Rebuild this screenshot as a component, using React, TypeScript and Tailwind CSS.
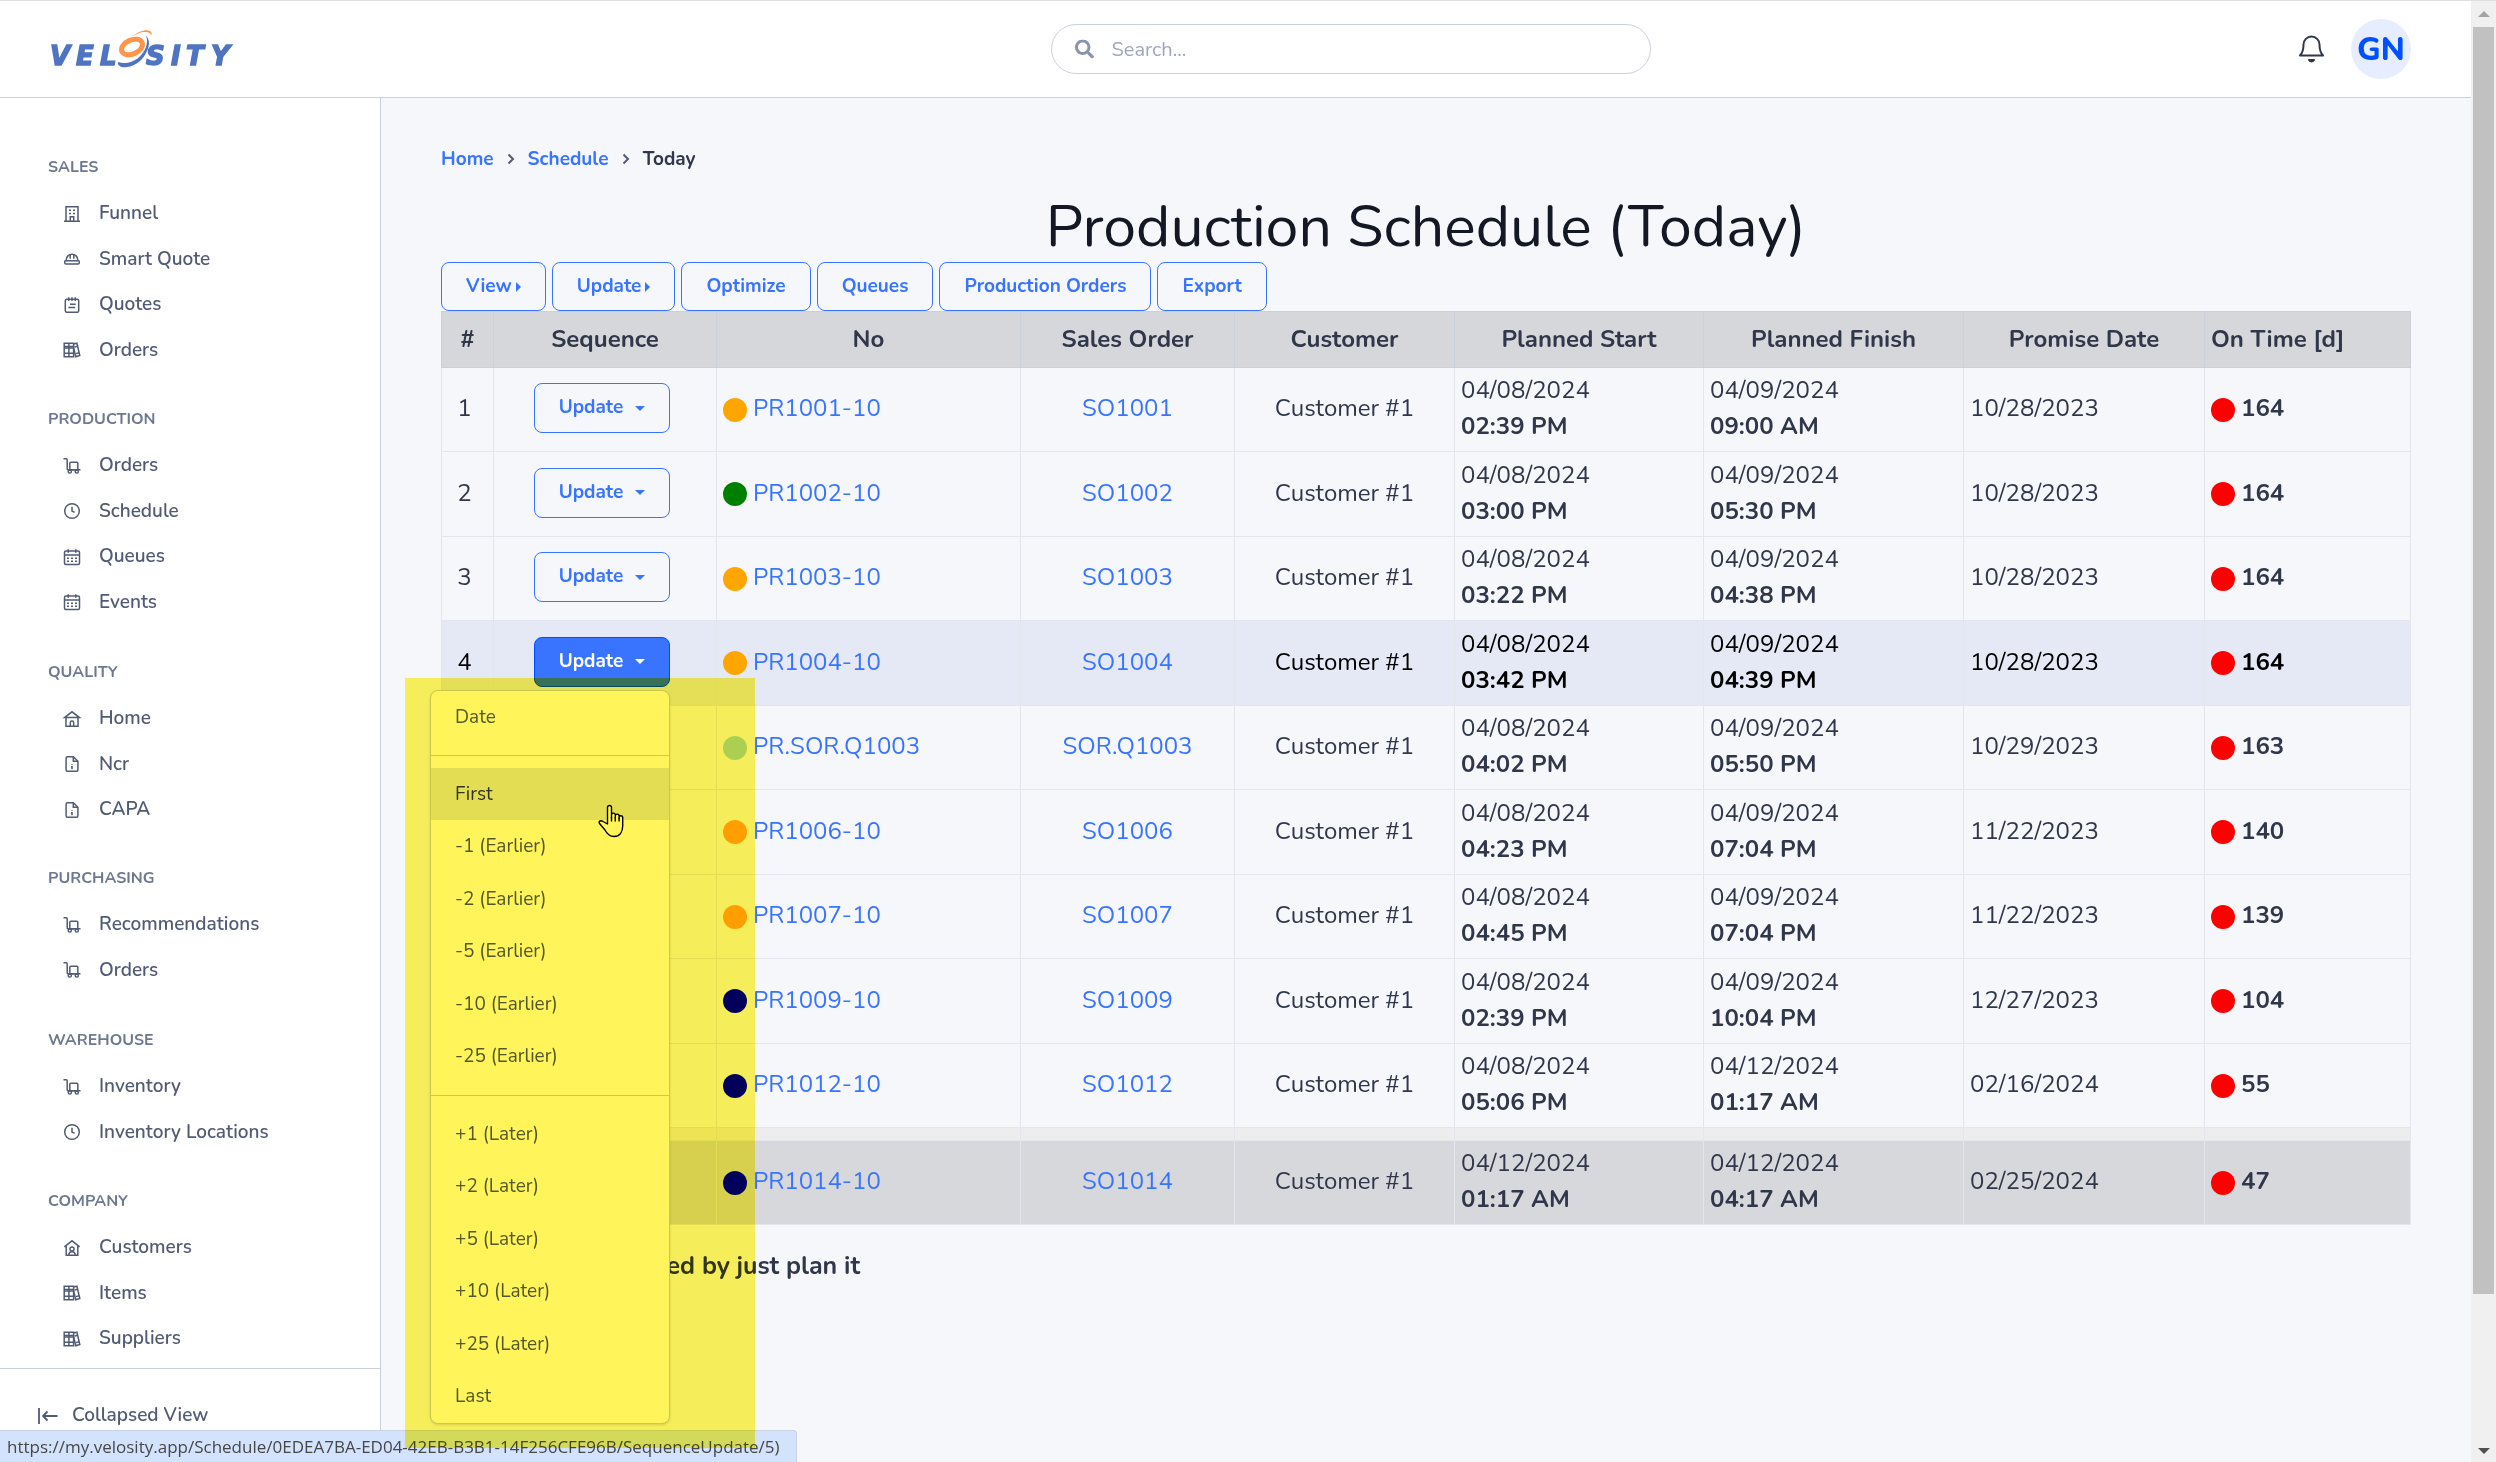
import type { ReactNode } from "react";
import { clsx } from "clsx";
import { FaSearch } from "react-icons/fa";

type IconName = "building" | "hat" | "notes" | "books" | "dolly" | "clock" | "calendar" | "home" | "file" | "houseUser";

const nav: { title: string; items: [IconName, string][] }[] = [
  { title: "Sales", items: [["building", "Funnel"], ["hat", "Smart Quote"], ["notes", "Quotes"], ["books", "Orders"]] },
  { title: "Production", items: [["dolly", "Orders"], ["clock", "Schedule"], ["calendar", "Queues"], ["calendar", "Events"]] },
  { title: "Quality", items: [["home", "Home"], ["file", "Ncr"], ["file", "CAPA"]] },
  { title: "Purchasing", items: [["dolly", "Recommendations"], ["dolly", "Orders"]] },
  { title: "Warehouse", items: [["dolly", "Inventory"], ["clock", "Inventory Locations"]] },
  { title: "Company", items: [["houseUser", "Customers"], ["books", "Items"], ["books", "Suppliers"]] },
];

const dots = {
  orange: "bg-[#ffa500]",
  green: "bg-[#008000]",
  lightblue: "bg-[#add8e6]",
  blue: "bg-[#0000ff]",
  red: "bg-[#ff0000]",
};

type Row = {
  dot: keyof typeof dots;
  no: string;
  so: string;
  start: [string, string];
  finish: [string, string];
  promise: string;
  days: number;
};

const rows: Row[] = [
  { dot: "orange", no: "PR1001-10", so: "SO1001", start: ["04/08/2024", "02:39 PM"], finish: ["04/09/2024", "09:00 AM"], promise: "10/28/2023", days: 164 },
  { dot: "green", no: "PR1002-10", so: "SO1002", start: ["04/08/2024", "03:00 PM"], finish: ["04/09/2024", "05:30 PM"], promise: "10/28/2023", days: 164 },
  { dot: "orange", no: "PR1003-10", so: "SO1003", start: ["04/08/2024", "03:22 PM"], finish: ["04/09/2024", "04:38 PM"], promise: "10/28/2023", days: 164 },
  { dot: "orange", no: "PR1004-10", so: "SO1004", start: ["04/08/2024", "03:42 PM"], finish: ["04/09/2024", "04:39 PM"], promise: "10/28/2023", days: 164 },
  { dot: "lightblue", no: "PR.SOR.Q1003", so: "SOR.Q1003", start: ["04/08/2024", "04:02 PM"], finish: ["04/09/2024", "05:50 PM"], promise: "10/29/2023", days: 163 },
  { dot: "orange", no: "PR1006-10", so: "SO1006", start: ["04/08/2024", "04:23 PM"], finish: ["04/09/2024", "07:04 PM"], promise: "11/22/2023", days: 140 },
  { dot: "orange", no: "PR1007-10", so: "SO1007", start: ["04/08/2024", "04:45 PM"], finish: ["04/09/2024", "07:04 PM"], promise: "11/22/2023", days: 139 },
  { dot: "blue", no: "PR1009-10", so: "SO1009", start: ["04/08/2024", "02:39 PM"], finish: ["04/09/2024", "10:04 PM"], promise: "12/27/2023", days: 104 },
  { dot: "blue", no: "PR1012-10", so: "SO1012", start: ["04/08/2024", "05:06 PM"], finish: ["04/12/2024", "01:17 AM"], promise: "02/16/2024", days: 55 },
];

const nextShift: Row = {
  dot: "blue", no: "PR1014-10", so: "SO1014", start: ["04/12/2024", "01:17 AM"], finish: ["04/12/2024", "04:17 AM"], promise: "02/25/2024", days: 47,
};

const menuGroups = [
  ["Date"],
  ["First", "-1 (Earlier)", "-2 (Earlier)", "-5 (Earlier)", "-10 (Earlier)", "-25 (Earlier)"],
  ["+1 (Later)", "+2 (Later)", "+5 (Later)", "+10 (Later)", "+25 (Later)", "Last"],
];

const iconShapes: Record<IconName, ReactNode> = {
  building: (
    <>
      <path d="M2 15.3V.7h12v14.6M0 15.3h16M6.3 15V10.7h3.4V15" />
      <path d="M5 4.3h2M9 4.3h2M5 7.6h2M9 7.6h2" />
    </>
  ),
  hat: (
    <>
      <path d="M2.2 9.8V9a5.8 5.8 0 0 1 11.6 0v.8" />
      <path d="M6.2 3.8v4M9.8 3.8v4" />
      <path d="M1.6 9.8h12.8a.9.9 0 0 1 .9.9v1a1.4 1.4 0 0 1-1.4 1.4H2.1A1.4 1.4 0 0 1 .7 11.7v-1a.9.9 0 0 1 .9-.9z" />
    </>
  ),
  notes: (
    <>
      <rect x="1.3" y="2.3" width="13.4" height="13" rx="1.5" />
      <path d="M4.7.3v3.6M8 .3v3.6M11.3.3v3.6M6 7.3h5.6M4.4 10.6h6.8" />
    </>
  ),
  books: (
    <>
      <path d="M.2 1.3h4.7v13.4H.2zM4.900 1.300h4.700v13.400H4.900zM.2 4.600h9.400M.2 11.300h9.400" />
      <path d="M.2 6h9.400M9.600 2l3.300-.8 2.900 12.300-4 1.200L9.600 6M10.500 5l3.300-.8M12 11.600l3-.8" />
    </>
  ),
  dolly: (
    <>
      <path d="M-.5.7h2.700a1 1 0 0 1 1 1v9a1 1 0 0 0 1 1H16.500" />
      <rect x="5.800" y="4.300" width="8" height="7.400" rx="1" />
      <circle cx="5.800" cy="13.500" r="1.600" />
      <circle cx="12.800" cy="13.500" r="1.600" />
    </>
  ),
  clock: (
    <>
      <circle cx="8" cy="8" r="7.3" />
      <path d="M8 3.7V8l2.6 1.4" />
    </>
  ),
  calendar: (
    <>
      <rect x=".5" y="2" width="15" height="13.4" rx="1.5" />
      <path d="M.5 6h15M4.200.2v3.500M11.800.2v3.500" />
      <path d="M3 9.300h2M7 9.300h2M11 9.300h2M3 12.300h2M7 12.300h2M11 12.300h2" />
    </>
  ),
  home: (
    <>
      <path d="M.5 6.600L8 .8l7.500 5.800zM2 6.600v8.700h12V6.600" />
      <path d="M6.300 15.300v-3.500a1.700 1.700 0 0 1 3.400 0v3.500" />
    </>
  ),
  file: (
    <>
      <path d="M9.300.7H3.600a1.500 1.500 0 0 0-1.500 1.500v11.600a1.500 1.500 0 0 0 1.500 1.500h8.800a1.500 1.500 0 0 0 1.500-1.500V5.300z" />
      <path d="M9.300.7v4.600h4.600M8 8.300v.8M7 10.800h1v2.400" />
    </>
  ),
  houseUser: (
    <>
      <path d="M.4 6.800L8 .8l7.600 6M2.200 5.600v9.700h11.600V5.600" />
      <circle cx="8" cy="9" r="2" />
      <path d="M4.800 15a3.200 3.200 0 0 1 6.400 0" />
    </>
  ),
};

function Icon({ name }: { name: IconName }) {
  return (
    <svg viewBox="0 0 16 16" className="size-4 shrink-0 overflow-visible" fill="none" stroke="currentColor" strokeWidth="1.5" aria-hidden="true">
      {iconShapes[name]}
    </svg>
  );
}

function Logo() {
  return (
    <svg viewBox="0 0 196 52" className="h-[52px] w-[196px] overflow-visible" role="img" aria-label="Velosity">
      <g className="font-['DejaVu_Sans'] text-[26px] font-bold italic" fill="#4f74c2" stroke="#4f74c2" strokeWidth="1.4">
        <text x="2 28 52" y="42">VEL</text>
        <text x="98 123 138 163" y="42">SITY</text>
      </g>
      <g transform="translate(-2 5)">
        <ellipse cx="86" cy="19" rx="11" ry="7" transform="rotate(-24 86 19)" fill="none" stroke="#ff9548" strokeWidth="5" />
        <path d="M72 34c12 4 24-4 28-15 2-6 1-10-1-12 5 4 5 10 2 16-4 9-11 15-20 16-5 1-10-1-9-5z" fill="#4f74c2" />
        <path d="M86 9c5-5 14-8 18-6 2 1 2 3 1 5 0-3-2-4-6-4-5 0-9 2-13 5z" fill="#ff9548" />
      </g>
    </svg>
  );
}

function Header() {
  return (
    <header className="flex h-[97px] shrink-0 items-center border-b border-[#cbd0dd] bg-white pr-[60px] pl-12">
      <a href="#" className="w-[354px] shrink-0">
        <Logo />
      </a>
      <form className="flex flex-1 justify-center" role="search">
        <label className="relative block w-[600px]">
          <FaSearch className="absolute top-1/2 left-6 size-[19px] -translate-y-1/2 text-[#8a94ad]" />
          <input
            type="search"
            aria-label="Search"
            placeholder="Search..."
            className="h-[50px] w-full rounded-full border border-[#cbd0dd] bg-white pr-6 pl-[60px] text-xl text-[#31374a] placeholder:text-[#9fa6bc]"
          />
        </label>
      </form>
      <div className="flex items-center gap-[27px]">
        <button type="button" aria-label="Notifications">
          <svg viewBox="0 0 25 28" className="h-7 w-[25px]" fill="none" stroke="#31374a" strokeWidth="2" strokeLinecap="round" strokeLinejoin="round">
            <path d="M1 20.500C3.500 18 4.500 15 4.500 9.500a8 8 0 0 1 16 0c0 5.500 1 8.500 3.500 11z" />
            <path d="M10 25c.8 2 4.200 2 5 0z" />
          </svg>
        </button>
        <button type="button" className="flex size-[60px] items-center justify-center rounded-full bg-[#e5edff] pt-0.5 text-[32px] font-extrabold text-[#0050ff]">
          GN
        </button>
      </div>
    </header>
  );
}

function Sidebar() {
  return (
    <aside className="flex w-[381px] shrink-0 flex-col border-r border-[#cbd0dd] bg-white">
      <nav className="flex-1 overflow-hidden pt-[57px]">
        {nav.map((section) => (
          <div key={section.title} className="mb-[34px] pl-12 even:mb-[35px]">
            <h2 className="mb-3 text-base leading-6 font-bold text-[#6e7891] uppercase">{section.title}</h2>
            <ul>
              {section.items.map(([icon, label]) => (
                <li key={label} className="h-[45px] even:h-[46px]">
                  <a href="#" className="flex h-full items-center gap-[19px] pl-4 text-[19px] font-semibold text-[#525b75]">
                    <Icon name={icon} />
                    {label}
                  </a>
                </li>
              ))}
            </ul>
          </div>
        ))}
      </nav>
      <button type="button" className="flex h-[94px] shrink-0 items-center gap-[14px] border-t border-[#cbd0dd] pl-[38px] text-[19px] font-semibold text-[#525b75]">
        <svg viewBox="0 0 20 18" className="h-[18px] w-5" fill="none" stroke="currentColor" strokeWidth="1.8" aria-hidden="true">
          <path d="M1 1v16M19.500 9H5M9.500 4.500L5 9l4.500 4.500" strokeLinejoin="round" />
        </svg>
        Collapsed View
      </button>
    </aside>
  );
}

function Dot({ color }: { color: keyof typeof dots }) {
  return <span className={clsx("mt-[3px] size-6 shrink-0 rounded-full", dots[color])} />;
}

function CaretDown() {
  return <span className="border-x-5 border-t-5 border-x-transparent border-t-current" />;
}

function CaretRight() {
  return <span className="border-y-5 border-l-5 border-y-transparent border-l-current" />;
}

function ToolbarButton({ children, caret }: { children: ReactNode; caret?: boolean }) {
  return (
    <button
      type="button"
      className="flex h-[49px] items-center gap-1 rounded-lg border border-[#3874ff] px-6 text-[19px] font-bold text-[#3874ff]"
    >
      {children}
      {caret && <CaretRight />}
    </button>
  );
}

function SequenceMenu() {
  return (
    <div className="absolute top-full right-0 z-10 mt-[3px] w-[240px] divide-y divide-[#cbd0dd] rounded-lg border border-[#cbd0dd] bg-white text-left shadow-sm">
      {menuGroups.map((group) => (
        <ul key={group[0]} className="py-3 first:pt-0 last:pb-0">
          {group.map((item) => (
            <li key={item} className="h-[52px] even:h-[53px]">
              <a
                href="#"
                className={clsx(
                  "flex h-full items-center px-6 pt-0.5 text-[19px]",
                  item === "First" ? "bg-[#e3e6ed] text-[#31374a]" : "text-[#525b75]",
                )}
              >
                {item}
              </a>
            </li>
          ))}
        </ul>
      ))}
    </div>
  );
}

function When({ value }: { value: [string, string] }) {
  return (
    <td className="px-1.5 leading-9">
      {value[0]}
      <br />
      <strong className="font-bold">{value[1]}</strong>
    </td>
  );
}

function ScheduleRow({ row, index, className }: { row: Row; index: number; className?: string }) {
  const open = index === 4;

  return (
    <tr className={clsx("h-[84px] even:h-[85px] *:border *:border-[#e3e6ed] *:pb-[3px]", open && "bg-[#e4e9f5] text-black", className)}>
      <td className="pr-1.5 text-center">{index}</td>
      <td className="pr-1.5 text-center">
        <div className="relative inline-block align-middle">
          <button
            type="button"
            className={clsx(
              "flex h-[50px] w-[136px] items-center justify-center gap-3 rounded-lg border text-[19px] font-bold",
              open ? "border-[#004dff] bg-[#3874ff] text-white" : "border-[#3874ff] text-[#3874ff]",
            )}
          >
            Update
            <CaretDown />
          </button>
          {open && <SequenceMenu />}
        </div>
      </td>
      <td className="px-1.5">
        <div className="flex items-center gap-1.5">
          <Dot color={row.dot} />
          <a href="#" className="text-[#3874ff]">{row.no}</a>
        </div>
      </td>
      <td className="text-center">
        <a href="#" className="text-[#3874ff]">{row.so}</a>
      </td>
      <td className="text-center">Customer #1</td>
      <When value={row.start} />
      <When value={row.finish} />
      <td className="px-1.5">{row.promise}</td>
      <td className="px-1.5">
        <div className="flex items-center gap-1.5 font-bold">
          <Dot color="red" />
          {row.days}
        </div>
      </td>
    </tr>
  );
}

function ScheduleTable() {
  return (
    <table className="w-full table-fixed border-collapse text-2xl text-[#31374a]">
      <colgroup>
        <col className="w-[52px]" />
        <col className="w-[223px]" />
        <col className="w-[304px]" />
        <col className="w-[214px]" />
        <col className="w-[220px]" />
        <col className="w-[249px]" />
        <col className="w-[260px]" />
        <col className="w-[241px]" />
        <col />
      </colgroup>
      <thead>
        <tr className="h-14 bg-[#d6d7da] *:border *:border-[#cbd0dd] *:pb-0.5 *:font-bold">
          <th>#</th>
          <th>Sequence</th>
          <th>No</th>
          <th>Sales Order</th>
          <th>Customer</th>
          <th>Planned Start</th>
          <th>Planned Finish</th>
          <th>Promise Date</th>
          <th className="px-1.5 text-left">On Time [d]</th>
        </tr>
      </thead>
      <tbody>
        {rows.map((row, i) => (
          <ScheduleRow key={row.no} row={row} index={i + 1} />
        ))}
        <tr className="h-[13px] bg-[#ededed] *:border *:border-[#e3e6ed]">
          {Array.from({ length: 9 }, (_, i) => (
            <td key={i} />
          ))}
        </tr>
        <ScheduleRow row={nextShift} index={10} className="bg-[#d7d8dc]" />
      </tbody>
    </table>
  );
}

function Chevron() {
  return (
    <svg viewBox="0 0 8 12" className="h-3 w-2" fill="none" stroke="#525b75" strokeWidth="2" aria-hidden="true">
      <path d="M1.500 1.500L6 6l-4.500 4.500" />
    </svg>
  );
}

function Pointer() {
  return (
    <svg viewBox="0 0 26 34" className="absolute top-[803px] left-[598px] h-[34px] w-[26px]" fill="#fff" stroke="#000" strokeWidth="1.4" strokeLinejoin="round" aria-hidden="true">
      <path d="M9.500 20V3.500a2 2 0 0 1 4 0V14v-3a1.900 1.900 0 0 1 3.800 0v3-2a1.900 1.900 0 0 1 3.800 0v2.500-1a1.800 1.800 0 0 1 3.600 0V22c0 6-3 10.500-8.700 10.500-4.500 0-7-2.500-9-6.500L1.500 19.500c-1.200-2.500 1.500-3.500 3.500-2z" />
      <path d="M13.500 13v4.500M17.300 13v4.500M21.100 14v3.500" />
    </svg>
  );
}

function Scrollbar() {
  return (
    <div className="flex w-[25px] shrink-0 flex-col items-center bg-[#f0f0f0]" aria-hidden="true">
      <div className="flex h-[26px] items-center">
        <span className="border-x-6 border-b-6 border-x-transparent border-b-[#a3a3a3]" />
      </div>
      <div className="w-[21px] flex-[1267] bg-[#c1c1c1]" />
      <div className="flex flex-[168] items-end">
        <span className="mb-2 border-x-6 border-t-6 border-x-transparent border-t-[#505050]" />
      </div>
    </div>
  );
}

export default function App() {
  return (
    <div className="relative flex h-screen overflow-hidden border-t border-[#dfdfe0] bg-white font-['Nunito','Nunito_Sans','Lato',sans-serif]">
      <div className="flex min-w-0 flex-1 flex-col">
        <Header />
        <div className="flex min-h-0 flex-1">
          <Sidebar />
          <main className="min-w-0 flex-1 bg-[#f5f7fb] px-[60px] pt-[46px]">
            <nav aria-label="Breadcrumb" className="flex items-center gap-[13px] text-[19px] leading-[30px] font-bold">
              <a href="#" className="text-[#3874ff]">Home</a>
              <Chevron />
              <a href="#" className="text-[#3874ff]">Schedule</a>
              <Chevron />
              <span className="text-[#31374a]">Today</span>
            </nav>
            <h1 className="mt-[18px] text-center text-[59px] leading-[70px] text-[#141824]">Production Schedule (Today)</h1>
            <div className="flex gap-1.5">
              <ToolbarButton caret>View</ToolbarButton>
              <ToolbarButton caret>Update</ToolbarButton>
              <ToolbarButton>Optimize</ToolbarButton>
              <ToolbarButton>Queues</ToolbarButton>
              <ToolbarButton>Production Orders</ToolbarButton>
              <ToolbarButton>Export</ToolbarButton>
            </div>
            <ScheduleTable />
            <p className="mt-[23px] w-[419px] text-right text-[25px] leading-9 font-bold whitespace-nowrap text-[#31374a]">
              Schedule powered by just plan it
            </p>
          </main>
        </div>
      </div>
      <Scrollbar />
      <div className="absolute bottom-0 left-0 z-20 flex h-8 items-center rounded-tr border-t border-r border-[#c9d3e6] bg-[#d3e3fd] pr-4 pl-[7px] font-['Open_Sans',sans-serif] text-[17px] text-[#474747]">
        https://my.velosity.app/Schedule/0EDEA7BA-ED04-42EB-B3B1-14F256CFE96B/SequenceUpdate/5)
      </div>
      <div className="pointer-events-none absolute inset-0 z-10">
        <Pointer />
      </div>
      {/* highlighter over the open menu */}
      <div className="pointer-events-none absolute top-[677px] left-[405px] z-30 h-[770px] w-[350px] bg-[#fff55a] mix-blend-multiply" />
    </div>
  );
}
